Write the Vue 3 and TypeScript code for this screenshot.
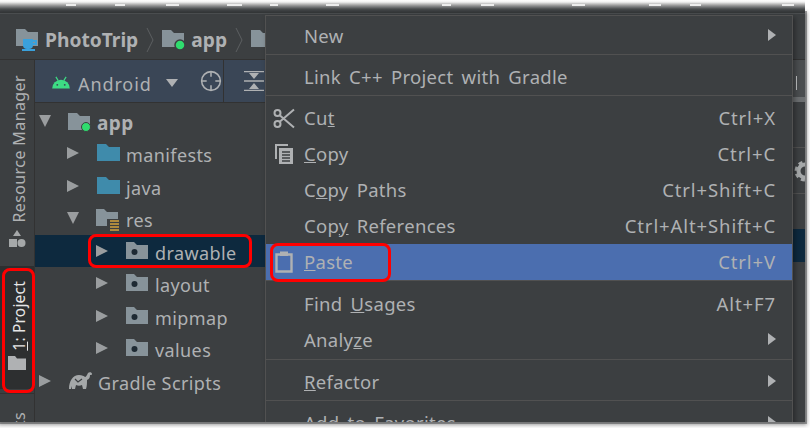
<script setup lang="ts">
interface Item { label: string; u?: number; key?: string; sub?: boolean; icon?: string; active?: boolean }
const sections: Item[][] = [
  [{ label: 'New', sub: true }],
  [{ label: 'Link C++ Project with Gradle' }],
  [
    { label: 'Cut', u: 2, key: 'Ctrl+X', icon: 'cut' },
    { label: 'Copy', u: 0, key: 'Ctrl+C', icon: 'copy' },
    { label: 'Copy Paths', u: 1, key: 'Ctrl+Shift+C' },
    { label: 'Copy References', u: 3, key: 'Ctrl+Alt+Shift+C' },
    { label: 'Paste', u: 0, key: 'Ctrl+V', icon: 'paste', active: true },
  ],
  [
    { label: 'Find Usages', u: 5, key: 'Alt+F7' },
    { label: 'Analyze', u: 5, sub: true },
  ],
  [{ label: 'Refactor', u: 0, sub: true }],
  [{ label: 'Add to Favorites', sub: true }],
]
interface TreeNode { label: string; depth: number; arrow: 'r' | 'd'; icon: string; sel?: boolean; bold?: boolean }
const tree: TreeNode[] = [
  { label: 'app', depth: 0, arrow: 'd', icon: 'module', bold: true },
  { label: 'manifests', depth: 1, arrow: 'r', icon: 'blue' },
  { label: 'java', depth: 1, arrow: 'r', icon: 'blue' },
  { label: 'res', depth: 1, arrow: 'd', icon: 'res' },
  { label: 'drawable', depth: 2, arrow: 'r', icon: 'dot', sel: true },
  { label: 'layout', depth: 2, arrow: 'r', icon: 'dot' },
  { label: 'mipmap', depth: 2, arrow: 'r', icon: 'dot' },
  { label: 'values', depth: 2, arrow: 'r', icon: 'dot' },
  { label: 'Gradle Scripts', depth: 0, arrow: 'r', icon: 'gradle' },
]
const folder = 'M0 1h9l3 3h10v14H0z'
const dashSpec: [number, number][] = [[66, 10], [115, 10], [166, 13], [227, 15], [270, 8], [326, 13], [442, 9], [481, 13], [572, 13], [649, 12], [690, 11], [782, 12]]
const dashes = dashSpec.map(([x, w], i) => ({
  marginLeft: `${x - (i ? dashSpec[i - 1][0] + dashSpec[i - 1][1] : 0)}px`,
  width: `${w}px`,
}))
</script>

<template>
  <div class="page">
    <div class="top-edge">
      <span v-for="(d, i) in dashes" :key="i" class="dash" :style="d"></span>
    </div>
    <div class="ide">
      <div class="crumbs">
        <svg class="ci" width="23" height="24" viewBox="0 0 23 24">
          <path :d="folder" fill="#87939a" />
          <path d="M7 11h10v6a4 4 0 0 1-4 4h-2a4 4 0 0 1-4-4z" fill="#3aa1dc" />
          <path d="M17 13h3v3h-3" fill="none" stroke="#3aa1dc" stroke-width="2" />
          <path d="M6 22h13" stroke="#3aa1dc" stroke-width="2" />
        </svg>
        <b class="cl">PhotoTrip</b>
        <svg class="chev" width="8" height="26" viewBox="0 0 8 26"><path d="M1 1l6 12-6 12" fill="none" stroke="#5c5f61" /></svg>
        <svg class="ci2" width="23" height="22" viewBox="0 0 23 22">
          <path :d="folder" fill="#87939a" />
          <circle cx="18" cy="16" r="5" fill="#2fdc6e" stroke="#3c3f41" stroke-width="1.500" />
        </svg>
        <b class="cl">app</b>
        <svg class="chev" width="8" height="26" viewBox="0 0 8 26"><path d="M1 1l6 12-6 12" fill="none" stroke="#5c5f61" /></svg>
        <svg class="ci2" width="23" height="22" viewBox="0 0 23 22"><path :d="folder" fill="#87939a" /></svg>
      </div>
      <div class="body">
        <aside class="strip">
          <div class="vtab res-tab">
            <span class="vt">Resource Manager</span>
            <svg width="18" height="18" viewBox="0 0 18 18">
              <path d="M9 0l4 6H5z" fill="#a5a8a9" />
              <rect x="1" y="9" width="8" height="8" fill="#a5a8a9" />
              <circle cx="13.500" cy="13" r="4" fill="#a5a8a9" />
            </svg>
          </div>
          <div class="vtab proj-tab">
            <span class="vt white"><u>1</u>: Project</span>
            <svg width="18" height="14" viewBox="0 0 18 14"><path d="M0 0h7l2 2.500h9V14H0z" fill="#afb1b3" /></svg>
          </div>
          <div class="vtab stub"><span class="vt">ts</span></div>
        </aside>
        <section class="panel">
          <div class="toolbar">
            <svg width="20" height="13" viewBox="0 0 21 14">
              <path d="M1 13.500a9.500 9.500 0 0 1 19 0z" fill="#3ddc84" />
              <path d="M5 1l2.500 4M16 1l-2.500 4" stroke="#3ddc84" stroke-width="1.300" />
              <circle cx="6.500" cy="9.500" r="1" fill="#3a4656" /><circle cx="14.500" cy="9.500" r="1" fill="#3a4656" />
            </svg>
            <span class="tb-label">Android</span>
            <span class="tb-caret"></span>
            <svg class="tb-target" width="22" height="22" viewBox="0 0 23 23" fill="none" stroke="#afb1b3" stroke-width="1.600">
              <circle cx="11.500" cy="11.500" r="9.800" />
              <path d="M11.500 1v6M11.500 16v6M1 11.500h6M16 11.500h6" />
            </svg>
            <span class="tb-sep"></span>
            <svg class="tb-collapse" width="20" height="20" viewBox="0 0 20 20">
              <path d="M0 0.500h20M0 10h20M0 19.500h20" stroke="#afb1b3" stroke-width="1.300" />
              <path d="M5 2h10l-5 6zM5 18h10l-5-6z" fill="#afb1b3" />
            </svg>
          </div>
          <div class="tree">
            <div v-for="n in tree" :key="n.label" class="node" :class="['d' + n.depth, { sel: n.sel }]">
              <span class="arrow" :class="n.arrow"></span>
              <svg v-if="n.icon === 'module'" class="ni down" width="23" height="20" viewBox="0 0 23 20">
                <path :d="folder" fill="#87939a" />
                <circle cx="18" cy="15" r="4.500" fill="#2fdc6e" stroke="#3c3f41" />
              </svg>
              <svg v-else-if="n.icon === 'blue'" class="ni" width="23" height="18" viewBox="0 0 23 18"><path d="M0 0h9l3 3h11v14H0z" fill="#3f8bab" /></svg>
              <svg v-else-if="n.icon === 'res'" class="ni down" width="24" height="22" viewBox="0 0 24 22">
                <path d="M0 0h8l3 3h11v14H0z" fill="#87939a" />
                <path d="M11 10h13v12H11z" fill="#3c3f41" />
                <path d="M14 12h9M14 15h9M14 18h9M14 21h9" stroke="#d3a43c" stroke-width="1.500" />
              </svg>
              <svg v-else-if="n.icon === 'dot'" class="ni" width="23" height="18" viewBox="0 0 23 18">
                <path d="M0 0h8l3 3h11v14H0z" fill="#87939a" />
                <circle cx="8.500" cy="10" r="3" fill="#1e2a33" />
              </svg>
              <svg v-else class="ni" width="23" height="17" viewBox="0 0 23 17">
                <path d="M0 17C0 9 4 3 10 3c3 0 5 1 6 2 1 0 2-2 3-4 1-1 4-1 4 1 0 1-1 1-2 1 0 3-1 4-3 5 0 3 0 6-1 9h-3l-1-4c-2 1-4 1-6 0l-1 4H3v-3l-1 3z" fill="#a5a8a9" />
                <path d="M6 7l3 3 4-3" fill="none" stroke="#3c3f41" stroke-width="1.200" />
              </svg>
              <span class="nl" :class="{ bold: n.bold }">{{ n.label }}</span>
            </div>
          </div>
          <div class="mark mark-drawable"></div>
        </section>
        <section class="rest">
          <div class="rest-head"><span class="rest-tick"></span></div>
          <div class="rest-bar"></div>
          <div class="rest-gap"></div>
          <div class="rest-gear">
            <svg width="11" height="22" viewBox="0 0 11 22" fill="none" stroke="#a5a8a9">
              <circle cx="11" cy="11" r="6.500" stroke-width="4" />
              <circle cx="11" cy="11" r="9" stroke-width="3" stroke-dasharray="4 3.100" />
            </svg>
          </div>
          <div class="rest-space"></div>
          <div class="rest-sel"></div>
        </section>
      </div>
      <div class="mark mark-project"></div>

      <div class="menu">
        <div v-for="(s, si) in sections" :key="si" class="sect" :class="'s' + si">
          <div v-for="it in s" :key="it.label" class="row" :class="{ active: it.active }">
            <span class="ico">
              <svg v-if="it.icon === 'cut'" width="22" height="21" viewBox="0 0 22 21" fill="none" stroke="#afb1b3" stroke-width="2">
                <circle cx="4.500" cy="5" r="3" /><circle cx="4.500" cy="16" r="3" />
                <path d="M7 7.500L21 19.500M7 13.500L21 1.500" />
              </svg>
              <svg v-else-if="it.icon === 'copy'" width="20" height="22" viewBox="0 0 20 22">
                <path d="M1 1h13v2H3v13H1z" fill="#afb1b3" />
                <path d="M5 5h14v16H5z" fill="#afb1b3" />
                <path d="M8 9h8M8 12h8M8 15h8M8 18h8" stroke="#3c3f41" stroke-width="1.300" />
              </svg>
              <svg v-else-if="it.icon === 'paste'" width="18" height="22" viewBox="0 0 18 22">
                <path d="M1.500 3.500h15v17h-15z" fill="none" stroke="#afb1b3" stroke-width="2.400" />
                <rect x="5" y="0.500" width="8" height="4.500" fill="#afb1b3" />
              </svg>
            </span>
            <span class="lab">
              <template v-if="it.u !== undefined">{{ it.label.slice(0, it.u) }}<u>{{ it.label[it.u] }}</u>{{ it.label.slice(it.u + 1) }}</template>
              <template v-else>{{ it.label }}</template>
            </span>
            <span v-if="it.key" class="key">{{ it.key }}</span>
            <span v-if="it.sub" class="sub"></span>
          </div>
        </div>
        <div class="mark mark-paste"></div>
      </div>
    </div>
  </div>
</template>

<style>
html, body { margin: 0; background: #fff; }
</style>

<style scoped>
.page { width: 810px; height: 428px; overflow: hidden; background: #fff; font-family: "Noto Sans", sans-serif; }
.top-edge { height: 13px; box-sizing: border-box; padding-top: 4px; display: flex; align-items: flex-start; background: linear-gradient(#fff 0, #f2f2f2 2px, #bdbdbd 4px, #8a8b8c 6px, #4c4f51 9px, #3c3f41 12px); width: 805px; }
.dash { height: 2px; background: #ececec; flex: none; }
.ide { position: relative; width: 805px; height: 409px; background: #3c3f41; overflow: hidden; color: #afb1b3; outline: 2px solid rgba(60, 63, 65, .45); box-shadow: 0 1px 4px 2px rgba(0,0,0,.4); }
.crumbs { height: 47px; display: flex; align-items: center; padding: 6px 0 0 16px; box-sizing: border-box; border-top: 1px solid #4a4d4f; border-bottom: 1px solid #323232; }
.cl { font-size: 19.200px; font-weight: 700; color: #afb1b3; margin-left: 6px; }
.chev { margin: 0 8px; }
.body { display: flex; height: 362px; }
.strip { width: 35px; flex: none; border-right: 1px solid #323232; box-sizing: border-box; display: flex; flex-direction: column; align-items: center; }
.vtab { display: flex; flex-direction: column; align-items: center; width: 100%; box-sizing: border-box; }
.vt { writing-mode: vertical-rl; transform: rotate(180deg); font-size: 16px; letter-spacing: .4px; color: #afb1b3; line-height: 20px; margin-left: 3px; }
.vt.white { color: #e6e6e6; font-size: 15.500px; letter-spacing: .2px; }
.res-tab { padding-top: 15px; gap: 7px; height: 208px; }
.proj-tab { background: #2d2f30; height: 125px; gap: 6px; padding-top: 15px; }
.stub { height: 29px; overflow: hidden; padding-top: 18px; margin-top: 4px; border-top: 1px solid #323232; }
.panel { width: 231px; flex: none; border-right: 1px solid #323232; box-sizing: border-box; position: relative; }
.toolbar { height: 43px; background: #3a4656; display: flex; align-items: center; padding: 3px 0 0 16px; box-sizing: border-box; border-bottom: 1px solid #323232; }
.tb-label { font-size: 18px; letter-spacing: .9px; margin-left: 7px; padding-top: 2px; }
.tb-caret { width: 0; height: 0; border: 6.500px solid transparent; border-top: 8px solid #afb1b3; border-bottom: 0; margin-left: 14px; }
.tb-target { margin-left: 22px; margin-top: -4px; }
.tb-sep { width: 1px; height: 42px; background: #323232; margin: -3px 0 0 1px; }
.tb-collapse { margin-left: 20px; margin-top: -4px; }
.tree { padding-top: 1.500px; }
.node { height: 32.500px; display: flex; align-items: center; }
.node.d0 { padding-left: 4px; }
.node.d1 { padding-left: 32px; }
.node.d2 { padding-left: 61px; }
.node.sel { background: #0d293e; }
.arrow { width: 0; height: 0; flex: none; margin-right: 18px; }
.arrow.r { border: 6.500px solid transparent; border-left: 12px solid #9a9d9f; border-right: 0; }
.arrow.d { border: 6.500px solid transparent; border-top: 12px solid #9a9d9f; border-bottom: 0; margin-right: 17px; }
.ni { flex: none; }
.ni.down { margin-top: 3px; }
.nl { font-size: 18px; letter-spacing: .4px; margin-left: 6px; padding-top: 4px; }
.nl.bold { font-weight: 700; font-size: 19px; }
.rest { flex: 1; display: flex; flex-direction: column; }
.rest-head { height: 37px; background: #4a4d4f; padding: 16px 0 0 529px; box-sizing: border-box; flex: none; }
.rest-tick { display: block; width: 1px; height: 14px; background: #bfc1c3; margin-left: 1px; }
.rest-bar { height: 5px; background: #6b6e70; flex: none; }
.rest-gap { height: 46px; border-bottom: 1px solid #515151; flex: none; box-sizing: border-box; }
.rest-gear { height: 46px; border-bottom: 1px solid #515151; flex: none; box-sizing: border-box; padding: 12px 0 0 528px; }
.rest-space { height: 35px; flex: none; }
.rest-sel { height: 33px; background: #0d293e; flex: none; }
.menu { position: absolute; left: 265px; top: 2px; width: 528px; height: 440px; background: #3c3f41; border: 1px solid #515151; box-sizing: border-box; box-shadow: 2px 2px 5px rgba(0,0,0,.35); }
.sect { padding-top: 4px; border-bottom: 1px solid #515151; }
.sect.s0 { padding-top: 2px; }
.sect.s3 { padding-top: 5px; padding-bottom: 1px; }
.sect.s5 { border-bottom: 0; }
.row { height: 36px; display: flex; align-items: center; position: relative; padding: 0 16px 0 38px; font-size: 18.500px; letter-spacing: .3px; word-spacing: 3px; }
.row.active { background: #4b6eaf; }
.ico { position: absolute; left: 7px; top: 0; width: 22px; height: 36px; display: flex; align-items: center; justify-content: center; }
.lab { flex: 1; white-space: nowrap; padding-bottom: 2px; }
.key { white-space: nowrap; letter-spacing: .9px; padding-bottom: 2px; }
.sub { width: 0; height: 0; border: 6.500px solid transparent; border-left: 8px solid #afb1b3; border-right: 0; margin-top: -2px; }
.mark { position: absolute; border: 3px solid #f00; border-radius: 8px; box-sizing: border-box; pointer-events: none; }
.mark-drawable { left: 53px; top: 174px; width: 164px; height: 34px; }
.mark-project { left: 2px; top: 255px; width: 33px; height: 125px; }
.mark-paste { left: 4px; top: 227px; width: 121px; height: 39px; }
</style>
